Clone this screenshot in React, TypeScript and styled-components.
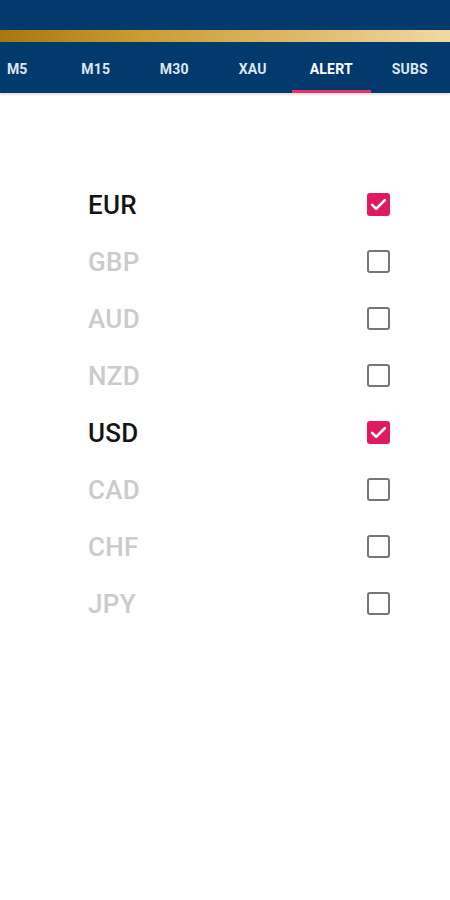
import styled, { createGlobalStyle } from 'styled-components'

const GlobalStyle = createGlobalStyle`
  html, body {
    margin: 0;
    padding: 0;
    background: #ffffff;
    font-family: Roboto, "Liberation Sans", sans-serif;
  }
`;

const Page = styled.div`
  width: 450px;
  min-height: 900px;
  background: #ffffff;
  overflow: hidden;
`;

const Header = styled.header`
  background: #023a6e;
  overflow: hidden;
  box-shadow: 0 2px 2px rgba(0, 0, 0, 0.12);
`;

const StatusArea = styled.div`
  height: 30px;
`;

const GoldBar = styled.div`
  height: 12px;
  background: linear-gradient(90deg, #a8780f 0%, #c99a2e 30%, #dcb867 65%, #f0d9a2 100%);
`;

const TabRow = styled.nav`
  display: flex;
  height: 51px;
  margin-left: -22px;
`;

const Tab = styled.div<{ $active?: boolean }>`
  flex: 0 0 78.5px;
  display: flex;
  align-items: center;
  justify-content: center;
  font-size: 14px;
  font-weight: 700;
  letter-spacing: 0.2px;
  color: ${(p) => (p.$active ? '#ffffff' : '#dfe6f0')};
  border-bottom: 3px solid ${(p) => (p.$active ? '#ec2f6c' : 'transparent')};
  box-sizing: border-box;
  padding-top: 5px;
`;

const List = styled.div`
  display: flex;
  flex-direction: column;
  padding: 83px 60px 0 88px;
`;

const Row = styled.label`
  display: flex;
  align-items: center;
  justify-content: space-between;
  height: 57px;
`;

const Currency = styled.span<{ $on: boolean }>`
  font-size: 26px;
  font-weight: 500;
  letter-spacing: 0.3px;
  color: ${(p) => (p.$on ? '#141414' : '#cbcbcb')};
`;

const Box = styled.span<{ $on: boolean }>`
  width: 23px;
  height: 23px;
  box-sizing: border-box;
  border-radius: 3px;
  border: ${(p) => (p.$on ? 'none' : '2.5px solid #767676')};
  background: ${(p) => (p.$on ? '#e01a5e' : 'transparent')};
  display: flex;
  align-items: center;
  justify-content: center;
`;

const tabs = ['M5', 'M15', 'M30', 'XAU', 'ALERT', 'SUBS'];

const currencies: { code: string; on: boolean }[] = [
  { code: 'EUR', on: true },
  { code: 'GBP', on: false },
  { code: 'AUD', on: false },
  { code: 'NZD', on: false },
  { code: 'USD', on: true },
  { code: 'CAD', on: false },
  { code: 'CHF', on: false },
  { code: 'JPY', on: false },
];

const Check = () => (
  <svg width="19" height="19" viewBox="0 0 24 24">
    <path d="M4 12.5l5 5L20 6.5" fill="none" stroke="#ffffff" strokeWidth="3.4" strokeLinecap="round" strokeLinejoin="round" />
  </svg>
);

const App = () => {
  return (
    <Page>
      <GlobalStyle />
      <Header>
        <StatusArea />
        <GoldBar />
        <TabRow>
          {tabs.map((t) => (
            <Tab key={t} $active={t === 'ALERT'}>{t}</Tab>
          ))}
        </TabRow>
      </Header>
      <List>
        {currencies.map((c) => (
          <Row key={c.code}>
            <Currency $on={c.on}>{c.code}</Currency>
            <Box $on={c.on}>{c.on && <Check />}</Box>
          </Row>
        ))}
      </List>
    </Page>
  );
};

export default App;
